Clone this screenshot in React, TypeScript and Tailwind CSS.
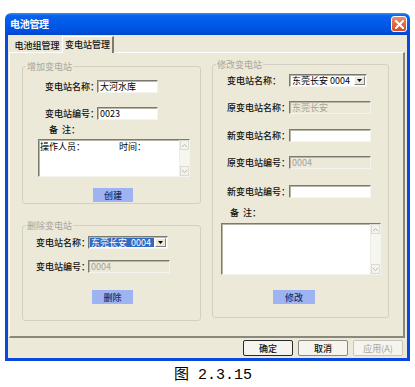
import React from "react";

const FONT = "font-['Noto_Sans_CJK_SC','Noto_Sans',sans-serif]";

function Label({ w, children }: { w: number; children: React.ReactNode }) {
  return (
    <span
      className="shrink-0 text-[9px] leading-[9px] text-[#111] font-medium whitespace-nowrap"
      style={{ width: w }}
    >
      {children}
    </span>
  );
}

function Input({
  w,
  h = 13,
  value,
  disabled,
}: {
  w: number;
  h?: number;
  value?: string;
  disabled?: boolean;
}) {
  return (
    <div
      className={`shrink-0 flex items-center pl-[2px] border border-t-[#7a7a70] border-l-[#7a7a70] border-b-[#f4f4ef] border-r-[#f4f4ef] shadow-[inset_1px_1px_0_#b8b5a8] text-[9px] leading-[9px] ${
        disabled ? "bg-[#ece9d8] text-[#a7a59a]" : "bg-white text-black"
      }`}
      style={{ width: w, height: h }}
    >
      {value}
    </div>
  );
}

function DropBtn() {
  return (
    <div className="w-[11px] self-stretch my-[1px] mr-[1px] flex items-center justify-center bg-[#ece9d8] border border-t-white border-l-white border-b-[#808080] border-r-[#808080]">
      <svg width="5" height="3" viewBox="0 0 5 3">
        <path d="M0 0H5L2.5 3Z" fill="#000" />
      </svg>
    </div>
  );
}

function Combo({
  w,
  selected,
}: {
  w: number;
  selected?: boolean;
}) {
  return (
    <div
      className="shrink-0 flex items-stretch bg-white border border-t-[#7a7a70] border-l-[#7a7a70] border-b-[#f4f4ef] border-r-[#f4f4ef] shadow-[inset_1px_1px_0_#b8b5a8] text-[9px] leading-[9px]"
      style={{ width: w, height: 13 }}
    >
      <div
        className={`flex-1 flex items-center justify-between pl-[1px] pr-[3px] my-[1px] ml-[1px] mr-[1px] ${
          selected ? "bg-[#316ac5] text-white" : "text-black"
        }`}
      >
        <span>东莞长安</span>
        <span>0004</span>
      </div>
      <DropBtn />
    </div>
  );
}

function TextArea({
  w,
  h,
  children,
}: {
  w: number;
  h: number;
  children?: React.ReactNode;
}) {
  return (
    <div
      className="shrink-0 flex bg-white border border-t-[#7a7a70] border-l-[#7a7a70] border-b-[#f4f4ef] border-r-[#f4f4ef] shadow-[inset_1px_1px_0_#b8b5a8]"
      style={{ width: w, height: h }}
    >
      <div className="flex-1 pl-[1px] pt-[2px] text-[9px] leading-[9px] text-black">
        {children}
      </div>
      <div className="w-[10px] flex flex-col justify-between bg-[#f6f6f1] border-l border-[#eeeee6]">
        <div className="h-[10px] flex items-center justify-center border border-[#dcdcd4] bg-[#f3f3ee]">
          <svg width="5" height="3" viewBox="0 0 5 3">
            <path d="M0 3L2.5 0.5L5 3" stroke="#b9b9b0" fill="none" />
          </svg>
        </div>
        <div className="h-[10px] flex items-center justify-center border border-[#dcdcd4] bg-[#f3f3ee]">
          <svg width="5" height="3" viewBox="0 0 5 3">
            <path d="M0 0L2.5 2.5L5 0" stroke="#b9b9b0" fill="none" />
          </svg>
        </div>
      </div>
    </div>
  );
}

function BlueBtn({ w, label }: { w: number; label: string }) {
  return (
    <div
      className="h-[14px] flex items-center justify-center bg-[#9db3f2] text-[9px] leading-[9px] text-[#1d2c66] font-medium"
      style={{ width: w }}
    >
      {label}
    </div>
  );
}

function Group({
  title,
  w,
  h,
  children,
}: {
  title: string;
  w: number;
  h: number;
  children: React.ReactNode;
}) {
  return (
    <fieldset
      className="shrink-0 border border-[#d3d0c2] rounded-[3px] p-0 m-0 min-w-0 flex flex-col"
      style={{ width: w, height: h }}
    >
      <legend className="ml-[3px] px-[1px] text-[9px] leading-[9px] text-[#a9a69a]">
        {title}
      </legend>
      {children}
    </fieldset>
  );
}

function BeiZhu() {
  return (
    <span className="flex text-[9px] leading-[9px] text-[#111] font-medium">
      <span>备</span>
      <span className="ml-[4px]">注：</span>
    </span>
  );
}

function DlgBtn({
  label,
  def,
  disabled,
}: {
  label: string;
  def?: boolean;
  disabled?: boolean;
}) {
  return (
    <div
      className={`w-[50px] h-[16px] flex items-center justify-center rounded-[2px] text-[9px] leading-[9px] bg-[#f5f4ef] border ${
        def ? "border-[#2a2a2a]" : "border-[#8c8a80]"
      } ${disabled ? "text-[#a8a699] border-[#c9c6b8]" : "text-[#111] font-medium"}`}
    >
      {label}
    </div>
  );
}

export default function App() {
  return (
    <div className={`w-[415px] h-[387px] bg-white flex flex-col ${FONT}`}>
      {/* window */}
      <div className="ml-[5px] mt-[13px] w-[405px] flex flex-col">
        {/* title bar */}
        <div className="h-[22px] rounded-t-[6px] flex items-center justify-between pl-[5px] pr-[3px] bg-[linear-gradient(to_bottom,#3d8df7_0%,#0a62ea_12%,#0058e8_55%,#0050dc_85%,#0046c8_100%)]">
          <span className="text-[10px] leading-[10px] font-bold text-white tracking-[-0.3px]">
            电池管理
          </span>
          <div className="w-[16px] h-[16px] rounded-[3px] border border-white bg-[linear-gradient(to_bottom,#ec8c6c,#d8481f)] flex items-center justify-center">
            <svg width="9" height="9" viewBox="0 0 9 9">
              <path
                d="M1 1L8 8M8 1L1 8"
                stroke="#fff"
                strokeWidth="2"
                strokeLinecap="square"
              />
            </svg>
          </div>
        </div>
        {/* body */}
        <div className="border-x-[3px] border-b-[3px] border-[#0a48dc] bg-[#ece9d8] flex flex-col">
          {/* tabs */}
          <div className="h-[17px] flex items-end pl-[4px]">
            <div className="w-[50px] h-[14px] flex items-center justify-center text-[9px] leading-[9px] text-[#111] font-medium">
              电池组管理
            </div>
            <div className="relative z-10 -mb-[1px] w-[52px] h-[17px] bg-[#ece9d8] border-t border-l border-white border-r-[2px] border-r-[#7d7b70] flex items-start justify-center pt-[3px] text-[9px] leading-[9px] text-[#111] font-medium">
              变电站管理
            </div>
          </div>
          {/* panel */}
          <div className="ml-[1px] w-[396px] h-[286px] border-t border-l border-white border-r-[2px] border-r-[#8a877c] border-b-[2px] border-b-[#8a877c] flex">
            {/* left column */}
            <div className="ml-[12px] flex flex-col">
              <div className="mt-[9px]">
                <Group title="增加变电站" w={179} h={142}>
                  <div className="mt-[9px] pl-[22px] flex items-center">
                    <Label w={52}>变电站名称：</Label>
                    <Input w={61} value="大河水库" />
                  </div>
                  <div className="mt-[14px] pl-[22px] flex items-center">
                    <Label w={52}>变电站编号：</Label>
                    <Input w={61} value="0023" />
                  </div>
                  <div className="mt-[5px] pl-[26px]">
                    <BeiZhu />
                  </div>
                  <div className="mt-[5px] pl-[15px]">
                    <TextArea w={152} h={38}>
                      <div className="flex">
                        <span className="w-[79px]">操作人员：</span>
                        <span>时间：</span>
                      </div>
                    </TextArea>
                  </div>
                  <div className="mt-[11px] pl-[70px]">
                    <BlueBtn w={40} label="创建" />
                  </div>
                </Group>
              </div>
              <div className="mt-[17px]">
                <Group title="删除变电站" w={179} h={100}>
                  <div className="mt-[6px] pl-[13px] flex items-center">
                    <Label w={52}>变电站名称：</Label>
                    <Combo w={80} selected />
                  </div>
                  <div className="mt-[11px] pl-[13px] flex items-center">
                    <Label w={52}>变电站编号：</Label>
                    <Input w={82} value="0004" disabled />
                  </div>
                  <div className="mt-[17px] pl-[69px]">
                    <BlueBtn w={41} label="删除" />
                  </div>
                </Group>
              </div>
            </div>
            {/* right column */}
            <div className="ml-[11px] mt-[7px]">
              <Group title="修改变电站" w={177} h={258}>
                <div className="mt-[5px] pl-[14px] flex items-center">
                  <Label w={62}>变电站名称：</Label>
                  <Combo w={78} />
                </div>
                <div className="mt-[14px] pl-[14px] flex items-center">
                  <Label w={62}>原变电站名称：</Label>
                  <Input w={82} value="东莞长安" disabled />
                </div>
                <div className="mt-[15px] pl-[14px] flex items-center">
                  <Label w={62}>新变电站名称：</Label>
                  <Input w={82} />
                </div>
                <div className="mt-[14px] pl-[14px] flex items-center">
                  <Label w={62}>原变电站编号：</Label>
                  <Input w={82} value="0004" disabled />
                </div>
                <div className="mt-[16px] pl-[14px] flex items-center">
                  <Label w={62}>新变电站编号：</Label>
                  <Input w={82} />
                </div>
                <div className="mt-[10px] pl-[17px]">
                  <BeiZhu />
                </div>
                <div className="mt-[6px] pl-[8px]">
                  <TextArea w={160} h={52} />
                </div>
                <div className="mt-[15px] pl-[60px]">
                  <BlueBtn w={42} label="修改" />
                </div>
              </Group>
            </div>
          </div>
          {/* dialog buttons */}
          <div className="mt-[2px] mb-[2px] pr-[4px] flex justify-end gap-[5px]">
            <DlgBtn label="确定" def />
            <DlgBtn label="取消" />
            <DlgBtn label="应用(A)" disabled />
          </div>
        </div>
      </div>
      {/* caption */}
      <div className="mt-[7px] ml-[174px] text-[15px] leading-[16px] text-black font-['Liberation_Mono','Noto_Sans_CJK_SC',monospace] whitespace-pre">
        图 2.3.15
      </div>
    </div>
  );
}
